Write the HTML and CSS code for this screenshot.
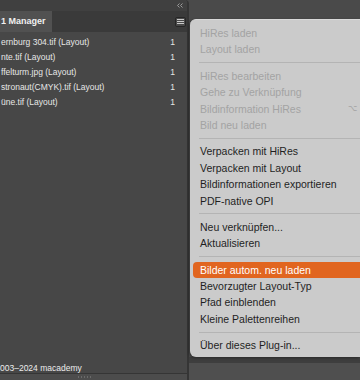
FILE: index.html
```html
<!DOCTYPE html>
<html lang="de">
<head>
  <meta charset="UTF-8" />
  <meta name="viewport" content="width=device-width, initial-scale=1.0"/>
  <title>OPI Manager</title>
  <link rel="stylesheet" href="styles.css">
</head>
<body>
  <div class="screen">
    <!-- Panel links mit der Bildliste -->
    <section class="panel">
      <div class="panel-top">
        <svg class="collapse" width="6" height="5" viewBox="0 0 6 5">
          <path d="M2.5 0.5 L0.5 2.5 L2.5 4.5 M5.5 0.5 L3.5 2.5 L5.5 4.5" fill="none" stroke="#9a9a9a" stroke-width="1"/>
        </svg>
      </div>
      <div class="tabbar">
        <div class="tab">1 Manager</div>
        <div class="menu-btn">
          <svg width="7" height="5" viewBox="0 0 7 5">
            <path d="M0 0.5 H7 M0 2.5 H7 M0 4.5 H7" stroke="#c8c8c8" stroke-width="1"/>
          </svg>
        </div>
      </div>
      <ul class="links">
        <li><span class="name">ernburg 304.tif (Layout)</span><span class="count">1</span></li>
        <li><span class="name">nte.tif (Layout)</span><span class="count">1</span></li>
        <li><span class="name">ffelturm.jpg (Layout)</span><span class="count">1</span></li>
        <li><span class="name">stronaut(CMYK).tif (Layout)</span><span class="count">1</span></li>
        <li><span class="name">üne.tif (Layout)</span><span class="count">1</span></li>
      </ul>
      <div class="copyright">003–2024 macademy</div>
      <div class="panel-foot"><span class="grip"></span></div>
    </section>

    <!-- Kontextmenü des Panels -->
    <aside class="side">
      <div class="side-top"></div>
      <ul class="menu">
        <li class="disabled">HiRes laden</li>
        <li class="disabled">Layout laden</li>
        <li class="sep"></li>
        <li class="disabled">HiRes bearbeiten</li>
        <li class="disabled">Gehe zu Verknüpfung</li>
        <li class="disabled">Bildinformation HiRes<span class="key">⌥</span></li>
        <li class="disabled">Bild neu laden</li>
        <li class="sep"></li>
        <li>Verpacken mit HiRes</li>
        <li>Verpacken mit Layout</li>
        <li>Bildinformationen exportieren</li>
        <li>PDF-native OPI</li>
        <li class="sep"></li>
        <li>Neu verknüpfen...</li>
        <li>Aktualisieren</li>
        <li class="sep"></li>
        <li class="active">Bilder autom. neu laden</li>
        <li>Bevorzugter Layout-Typ</li>
        <li>Pfad einblenden</li>
        <li>Kleine Palettenreihen</li>
        <li class="sep"></li>
        <li>Über dieses Plug-in...</li>
      </ul>
      <div class="side-bottom"></div>
    </aside>
  </div>
</body>
</html>
```

FILE: styles.css
```css
/* Grundlayout */
html, body {
  margin: 0;
  height: 100%;
  overflow: hidden;
}

body {
  font-family: "Liberation Sans", Arial, sans-serif;
  background-color: #4a4a4a;
}

.screen {
  display: flex;
  height: 380px;
}

/* Panel links */
.panel {
  width: 187px;
  flex-shrink: 0;
  display: flex;
  flex-direction: column;
  background-color: #474747;
  border-right: 2px solid #353535;
  border-top-right-radius: 4px;
}

.panel-top {
  height: 11px;
  display: flex;
  justify-content: flex-end;
  align-items: center;
  padding-right: 4px;
  background-color: #404040;
  border-top-right-radius: 4px;
}

.collapse {
  display: block;
}

.tabbar {
  height: 21px;
  display: flex;
  align-items: center;
  justify-content: space-between;
  background-color: #3a3a3a;
}

.tab {
  height: 21px;
  width: 52px;
  line-height: 21px;
  padding-left: 1px;
  box-sizing: border-box;
  background-color: #515151;
  color: #f0f0f0;
  font-size: 9px;
  font-weight: bold;
  white-space: nowrap;
  overflow: hidden;
}

.menu-btn {
  width: 11px;
  height: 10px;
  margin-right: 1px;
  box-sizing: border-box;
  border: 1px solid #262626;
  border-radius: 2px;
  background-color: #4a4a4a;
  display: flex;
  align-items: center;
  justify-content: center;
}

.menu-btn svg {
  display: block;
}

/* Liste der Verknüpfungen */
.links {
  list-style: none;
  margin: 0;
  padding: 2px 0 0;
  flex: 1;
}

.links li {
  height: 15px;
  display: flex;
  align-items: center;
  justify-content: space-between;
  padding: 0 12px 0 1px;
  color: #e6e6e6;
  font-size: 8.5px;
}

.count {
  width: 10px;
  text-align: right;
}

.copyright {
  height: 9px;
  line-height: 9px;
  padding-top: 2px;
  color: #ececec;
  font-size: 8.5px;
}

.panel-foot {
  height: 6px;
  border-top: 1px solid #353535;
  background-color: #4c4c4c;
  display: flex;
  justify-content: flex-start;
  padding-left: 78px;
}

.grip {
  width: 14px;
  height: 2px;
  margin-top: 2px;
  background-image: repeating-linear-gradient(90deg, #6a6a6a 0 1px, transparent 1px 3px);
}

/* rechte Seite mit Menü */
.side {
  flex: 1;
  display: flex;
  flex-direction: column;
  min-width: 0;
}

.side-top {
  height: 19px;
  background-color: #4a4a4a;
}

.menu {
  list-style: none;
  margin: 0 0 0 1px;
  padding: 5px 0 3px 3px;
  background-color: #cbcbcb;
  border-top: 1px solid #d9d9d9;
  border-radius: 6px 0 0 6px;
  box-shadow: -1px 1px 3px rgba(0, 0, 0, 0.35);
  font-size: 10.5px;
  color: #1f1f1f;
  white-space: nowrap;
  position: relative;
  z-index: 1;
}

.menu li {
  height: 16.4px;
  line-height: 16.4px;
  padding-left: 7px;
  display: grid;
  grid-template-columns: 148px auto;
}

.menu li.disabled {
  color: #a3a3a3;
}

.menu li.active {
  background-color: #e1651f;
  color: #ffffff;
  border-radius: 4px 0 0 4px;
}

.menu li.sep {
  height: 10px;
  display: block;
  margin-left: 6px;
  padding: 0;
  background: linear-gradient(#b4b4b4, #b4b4b4) no-repeat 0 4.5px / 100% 1px;
}

.key {
  font-family: "DejaVu Sans", sans-serif;
  font-size: 8px;
  color: #a3a3a3;
}

.side-bottom {
  flex: 1;
  background-color: #4f4f4f;
  border-top: 6px solid #3e3e3e;
}
```
